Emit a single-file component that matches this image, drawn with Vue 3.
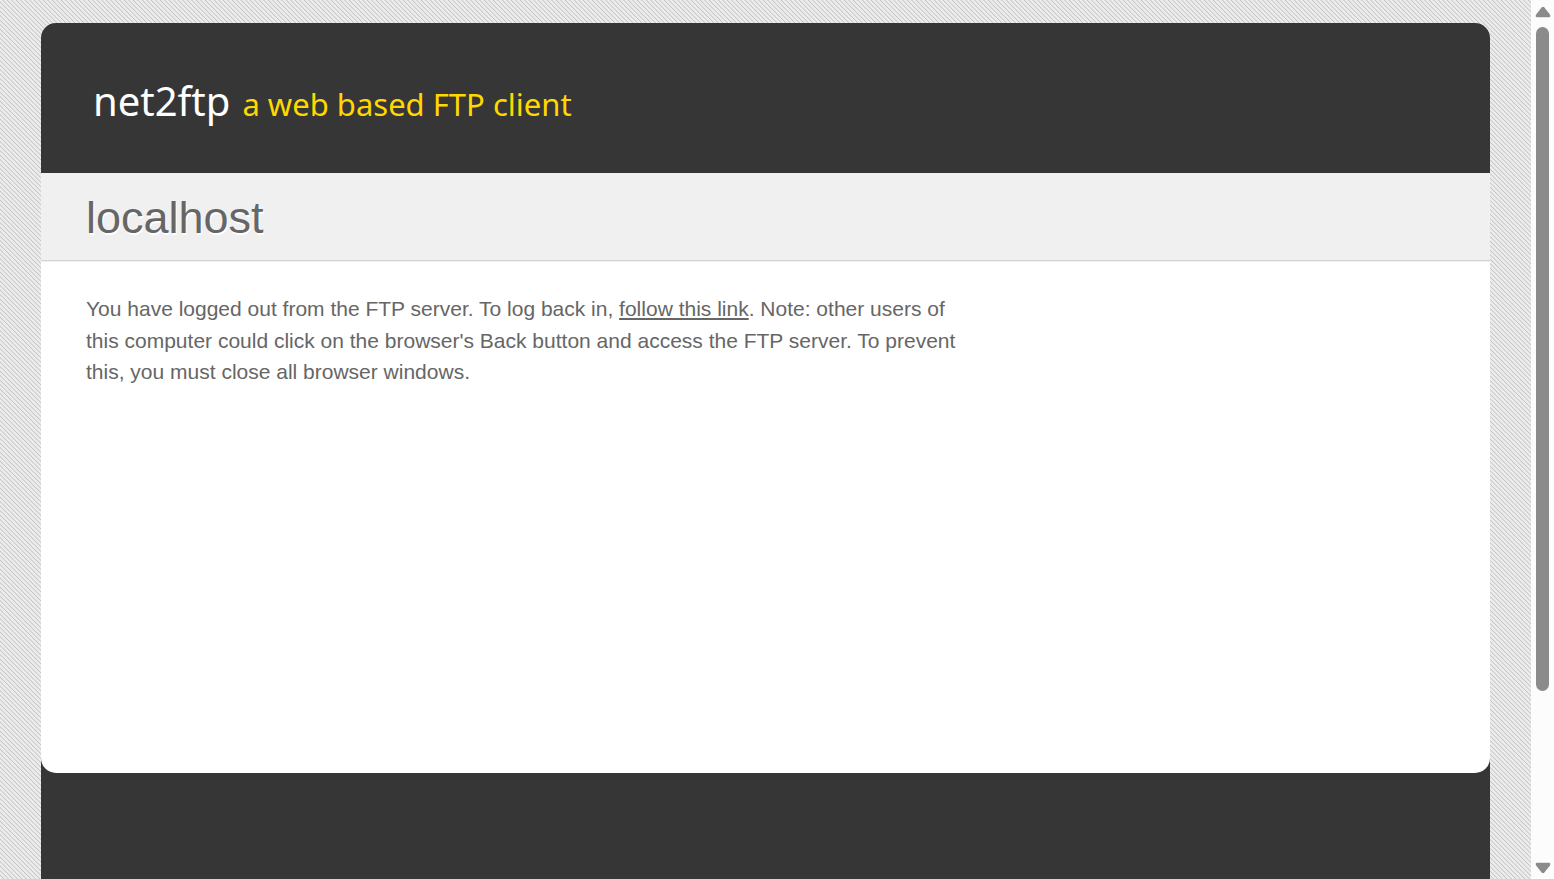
<script setup>
const host = 'localhost'
</script>

<template>
  <div class="viewport">
    <div class="page">
      <div class="wrapper">
        <header class="header">
          <a class="logo" href="#"><span class="name">net2ftp</span><span class="tagline">a web based FTP client</span></a>
        </header>
        <div class="content">
          <div class="title">
            <h1>{{ host }}</h1>
          </div>
          <main class="main">
            <p>
              You have logged out from the FTP server. To log back in,
              <a href="#">follow this link</a>. Note: other users of this computer could
              click on the browser's Back button and access the FTP server. To prevent
              this, you must close all browser windows.
            </p>
          </main>
        </div>
        <footer class="footer"></footer>
      </div>
    </div>
    <div class="scrollbar" aria-hidden="true">
      <svg width="16" height="12" viewBox="0 0 16 12"><path d="M6.6 1.6Q8 0 9.4 1.6L14.9 8.6Q16 11.2 14 11.2H2Q0 11.2 1.1 8.6Z" fill="#8b8b8b" /></svg>
      <div class="track"><div class="thumb"></div></div>
      <svg width="16" height="12" viewBox="0 0 16 12"><path d="M6.6 10.4Q8 12 9.4 10.4L14.9 3.4Q16 .8 14 .8H2Q0 .8 1.1 3.4Z" fill="#8b8b8b" /></svg>
    </div>
  </div>
</template>

<style>
body {
  margin: 0;
}
</style>

<style scoped>
.viewport {
  display: flex;
  height: 100vh;
  overflow: hidden;
  font-family: "Liberation Sans", Arial, sans-serif;
  color: #666;
}
.page {
  flex: 1;
  display: flex;
  box-sizing: border-box;
  padding: 23px 41px 0;
  background: repeating-linear-gradient(45deg, #ececec 0, #ececec 8%, #c2c2c2 14%, #ececec 20%, #ececec 25%);
  background-size: 9px 9px;
}
.wrapper {
  flex: 1;
  display: flex;
  flex-direction: column;
  background: #363636;
  border-radius: 15px 15px 0 0;
}
.header {
  display: flex;
  align-items: center;
  box-sizing: border-box;
  height: 150px;
  padding: 4px 52px 0;
}
.logo {
  display: flex;
  align-items: baseline;
  gap: 12px;
  font-family: "Noto Sans", sans-serif;
  text-decoration: none;
  white-space: nowrap;
}
.name {
  font-size: 40px;
  color: #fff;
}
.tagline {
  font-size: 31px;
  color: #ffd800;
}
.content {
  flex: 1;
  background: #fff;
  border-radius: 0 0 15px 15px;
}
.title {
  padding: 20px 45px 18px;
  background: #f0f0f0;
  border-bottom: 1px solid #d2d2d2;
  box-shadow: 0 1px 0 #efefef;
}
h1 {
  margin: 0;
  font-size: 45px;
  line-height: 49px;
  font-weight: 400;
  text-shadow: 1px 2px 0 #fff;
}
.main {
  padding: 32px 45px;
}
p {
  margin: 0;
  max-width: 880px;
  font-size: 21px;
  line-height: 1.5;
}
p a {
  color: inherit;
  text-decoration: underline;
}
.footer {
  height: 106px;
}
.scrollbar {
  display: flex;
  flex-direction: column;
  align-items: center;
  box-sizing: border-box;
  width: 23px;
  padding: 6px 0 5px;
  background: #fcfcfc;
}
.track {
  flex: 1;
  padding: 9px 0 5px;
}
.thumb {
  width: 13px;
  height: 80%;
  border-radius: 7px;
  background: #8b8b8b;
}
</style>
